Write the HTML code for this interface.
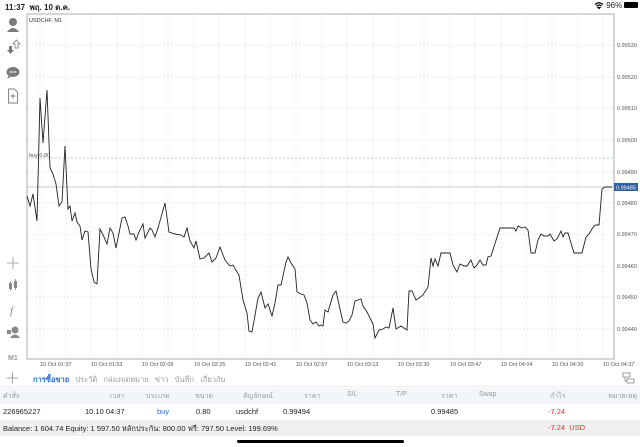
<!DOCTYPE html>
<html><head><meta charset="utf-8"><style>
*{margin:0;padding:0;box-sizing:border-box}
body{width:640px;height:447px;overflow:hidden;background:#fff;font-family:"Liberation Sans","Noto Sans CJK SC",sans-serif;position:relative;color:#222}
.a{position:absolute;white-space:nowrap}
.th{font-family:"Liberation Sans","Noto Sans CJK SC",sans-serif}
</style></head><body>
<div class="a" style="left:5px;top:1px;font-size:8px;font-weight:bold">11:37&nbsp; พฤ. 10 ต.ค.</div>
<div class="a" style="left:594px;top:1px;font-size:8px;">
<svg width="10" height="8" style="vertical-align:-1px"><path d="M1 3.5Q5 0 9 3.5M2.5 5Q5 3 7.5 5M4 6.5L5 7.5L6 6.5Z" stroke="#000" stroke-width="1.2" fill="none"/></svg> 96% <span style="display:inline-block;width:14px;height:6px;background:#000;border-radius:1px;vertical-align:0"></span></div>

<svg class="a" style="left:0;top:0" width="640" height="447">
<g stroke="#e2e2e2" stroke-dasharray="2,2" stroke-width="0.7">
<line x1="27" y1="45" x2="614" y2="45"/><line x1="27" y1="77" x2="614" y2="77"/><line x1="27" y1="108" x2="614" y2="108"/><line x1="27" y1="140" x2="614" y2="140"/><line x1="27" y1="172" x2="614" y2="172"/><line x1="27" y1="203" x2="614" y2="203"/><line x1="27" y1="234" x2="614" y2="234"/><line x1="27" y1="266" x2="614" y2="266"/><line x1="27" y1="297" x2="614" y2="297"/><line x1="27" y1="329" x2="614" y2="329"/>
<line x1="40" y1="14" x2="40" y2="359"/><line x1="66" y1="14" x2="66" y2="359"/><line x1="91" y1="14" x2="91" y2="359"/><line x1="117" y1="14" x2="117" y2="359"/><line x1="142" y1="14" x2="142" y2="359"/><line x1="168" y1="14" x2="168" y2="359"/><line x1="194" y1="14" x2="194" y2="359"/><line x1="219" y1="14" x2="219" y2="359"/><line x1="245" y1="14" x2="245" y2="359"/><line x1="270" y1="14" x2="270" y2="359"/><line x1="296" y1="14" x2="296" y2="359"/><line x1="322" y1="14" x2="322" y2="359"/><line x1="347" y1="14" x2="347" y2="359"/><line x1="373" y1="14" x2="373" y2="359"/><line x1="398" y1="14" x2="398" y2="359"/><line x1="424" y1="14" x2="424" y2="359"/><line x1="450" y1="14" x2="450" y2="359"/><line x1="475" y1="14" x2="475" y2="359"/><line x1="501" y1="14" x2="501" y2="359"/><line x1="526" y1="14" x2="526" y2="359"/><line x1="552" y1="14" x2="552" y2="359"/><line x1="578" y1="14" x2="578" y2="359"/><line x1="603" y1="14" x2="603" y2="359"/>
</g>
<rect x="27" y="14" width="587" height="345" fill="none" stroke="#999" stroke-width="0.8"/>
<line x1="27" y1="158" x2="614" y2="158" stroke="#9c9" stroke-dasharray="2,2" stroke-width="0.8"/>
<line x1="27" y1="187" x2="614" y2="187" stroke="#bbb" stroke-width="0.8"/>
<polyline fill="none" stroke="#222" stroke-width="0.9" points="27,196 30,206 33,194 37,221 40,98 43,143 47,90 50,168 53,174 56,184 59,206 62,202 65,146 68,209 70,206 72,221 75,213 77,222 80,226 82,240 85,231 88,232 91,269 94,282 97,284 100,229 104,237 107,244 110,228 113,233 116,248 119,233 122,218 125,217 128,226 130,234 134,234 136,240 139,232 143,224 145,238 150,228 152,230 155,237 158,228 165,203 169,232 175,234 181,235 184,237 187,228 190,241 194,248 196,241 200,259 204,258 209,253 212,262 216,258 220,247 225,260 230,266 233,265 237,272 239,275 243,300 247,313 249,331 252,332 254,321 258,298 261,292 265,308 268,304 272,316 275,303 278,285 281,285 286,262 288,257 291,263 295,269 297,292 301,294 304,295 307,303 310,320 313,324 316,322 319,326 321,325 323,326 325,310 328,312 333,295 336,291 340,309 343,322 346,323 349,321 352,315 355,301 358,300 361,299 363,306 367,312 370,318 373,324 375,338 379,330 383,329 386,327 389,328 393,308 396,329 401,326 404,328 407,330 409,291 412,291 416,300 419,298 423,295 428,287 431,258 433,266 435,259 438,266 441,253 446,253 450,253 453,265 457,272 460,264 464,266 467,266 471,260 474,268 477,265 480,260 483,265 486,265 488,257 491,256 500,228 505,228 514,228 516,231 518,226 522,228 525,227 528,230 531,253 535,253 538,240 541,234 544,236 548,236 550,234 554,241 557,239 561,231 563,237 565,233 568,233 574,253 582,253 586,237 589,234 592,229 594,226 596,225 599,225 602,189 605,187 612,187"/>
<g font-size="5.5" fill="#555" font-family="Liberation Sans">
<text x="617" y="47">0.99530</text><text x="617" y="79">0.99520</text><text x="617" y="110">0.99510</text><text x="617" y="142">0.99500</text><text x="617" y="174">0.99490</text><text x="617" y="205">0.99480</text><text x="617" y="236">0.99470</text><text x="617" y="268">0.99460</text><text x="617" y="299">0.99450</text><text x="617" y="331">0.99440</text>
</g>
<rect x="614" y="183" width="24" height="8" fill="#2f5f9f"/>
<text x="616" y="189.5" font-size="5.5" fill="#fff" font-family="Liberation Sans">0.99485</text>
<text x="29" y="22" font-size="5.5" fill="#333" font-family="Liberation Sans">USDCHF, M1</text>
<text x="29" y="157" font-size="5.5" fill="#555" font-family="Liberation Sans">buy 0.80</text>
<g font-size="5.5" fill="#555" font-family="Liberation Sans">
<text x="40" y="366">10 Oct 01:37</text><text x="91" y="366">10 Oct 01:53</text><text x="142" y="366">10 Oct 02:09</text><text x="194" y="366">10 Oct 02:25</text><text x="245" y="366">10 Oct 02:41</text><text x="296" y="366">10 Oct 02:57</text><text x="347" y="366">10 Oct 03:13</text><text x="398" y="366">10 Oct 03:30</text><text x="450" y="366">10 Oct 03:47</text><text x="501" y="366">10 Oct 04:04</text><text x="552" y="366">10 Oct 04:20</text><text x="603" y="366">10 Oct 04:37</text>
</g>
<!-- left toolbar icons -->
<g fill="#7a7a7a">
<circle cx="13" cy="22" r="4"/><path d="M7 32Q13 24 19 32Z"/>
<path d="M9 46h3v4h2l-3.5 4-3.5-4h2z"/><path d="M15 48v-4h-2l3.5-4 3.5 4h-2v4z" fill="none" stroke="#7a7a7a" stroke-width="0.8"/>
<ellipse cx="13" cy="72" rx="6.5" ry="5"/><path d="M9 75l-2 4 5-3z"/>
<circle cx="10.5" cy="72" r="0.9" fill="#fff"/><circle cx="13" cy="72" r="0.9" fill="#fff"/><circle cx="15.5" cy="72" r="0.9" fill="#fff"/>
</g>
<path d="M8.5 89h6l3 3v11h-9z M10.5 96h5 M13 93.5v5" fill="none" stroke="#7a7a7a" stroke-width="0.9"/>
<path d="M7 263h12M13 257v12" stroke="#999" stroke-width="0.8"/>
<g fill="#888"><rect x="9" y="283" width="3" height="6"/><rect x="14" y="281" width="3" height="7"/><path d="M10.5 281v10M15.5 279v11" stroke="#888" stroke-width="0.8"/></g>
<text x="10" y="314" font-size="11" font-style="italic" fill="#888" font-family="Liberation Serif">f</text>
<g fill="#888"><circle cx="15" cy="330" r="3.5"/><path d="M10 338q5-7 10 0z"/><rect x="7" y="330" width="4" height="4"/></g>
<text x="8" y="360" font-size="7" fill="#999" font-weight="bold" font-family="Liberation Sans">M1</text>
<!-- tab bar -->
<path d="M7 378h11M12.5 372.5v11" stroke="#888" stroke-width="0.8"/>
<g fill="none" stroke="#888" stroke-width="0.8"><rect x="623" y="373" width="7" height="4"/><rect x="627" y="379" width="7" height="4"/><path d="M625 377v4h2"/></g>
<rect x="237" y="440" width="167" height="3" rx="1.5" fill="#000"/>
</svg>
<div style="position:absolute;left:0;top:370px;width:640px;height:17px;border-bottom:1px solid #eee"></div>
<div class="a" style="top:374px;left:33px;font-size:7.5px;color:#999">
<span style="color:#2a6fd6;font-weight:bold">การซื้อขาย</span>&nbsp;&nbsp; ประวัติ&nbsp;&nbsp; กล่องจดหมาย&nbsp;&nbsp; ข่าว&nbsp;&nbsp; บันทึก&nbsp;&nbsp; เกี่ยวกับ</div>
<div style="position:absolute;left:0;top:388px;width:640px;height:16px;background:#f2f6fb"></div>
<div class="a" style="top:391px;left:0;width:640px;font-size:7px;color:#999">
<span class="a" style="left:3px">คำสั่ง</span><span class="a" style="left:110px">เวลา</span><span class="a" style="left:146px">ประเภท</span><span class="a" style="left:195px">ขนาด</span><span class="a" style="left:243px">สัญลักษณ์</span><span class="a" style="left:304px">ราคา</span><span class="a" style="left:347px">S/L</span><span class="a" style="left:396px">T/P</span><span class="a" style="left:441px">ราคา</span><span class="a" style="left:479px">Swap</span><span class="a" style="left:550px">กำไร</span><span class="a" style="right:3px">หมายเหตุ</span></div>
<div class="a" style="top:407px;left:0;width:640px;font-size:7.5px;color:#222">
<span class="a" style="left:3px">226965227</span><span class="a" style="left:85px">10.10 04:37</span><span class="a" style="left:157px;color:#2a6fd6">buy</span><span class="a" style="left:196px">0.80</span><span class="a" style="left:236px">usdchf</span><span class="a" style="left:283px">0.99494</span><span class="a" style="left:431px">0.99485</span><span class="a" style="left:548px;color:#d33">-7.24</span></div>
<div style="position:absolute;left:0;top:420px;width:640px;height:16px;background:#f0f0f0"></div>
<div class="a" style="top:423px;left:3px;font-size:7.5px;color:#222">Balance: 1 604.74 Equity: 1 597.50 หลักประกัน: 800.00 ฟรี: 797.50 Level: 199.69%</div>
<div class="a" style="top:423px;left:548px;font-size:7.5px;color:#d33">-7.24&nbsp; USD</div>
</body></html>
